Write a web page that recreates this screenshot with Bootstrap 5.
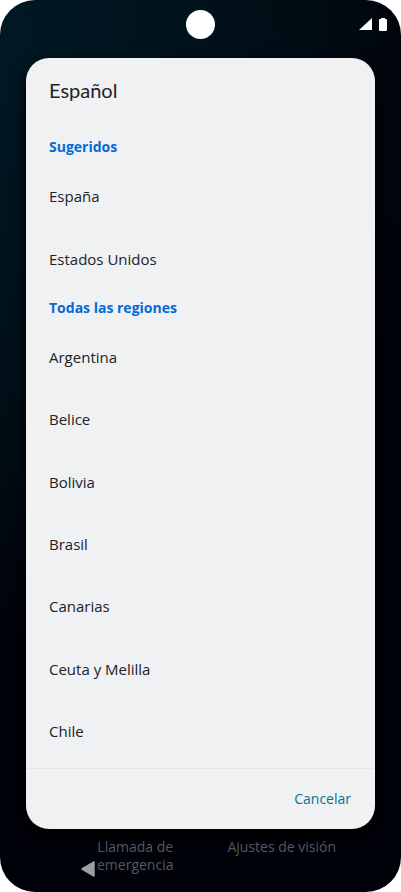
<!DOCTYPE html>
<html lang="es">
<head>
<meta charset="utf-8">
<meta name="viewport" content="width=device-width, initial-scale=1">
<title>Español</title>
<link href="https://cdn.jsdelivr.net/npm/bootstrap@5.3.0/dist/css/bootstrap.min.css" rel="stylesheet">
<style>
body { background: #fff; font-family: "Open Sans", "Noto Sans", sans-serif; font-size: 15px; line-height: 20px; color: #202327; }
.phone { border-radius: 35px; background: radial-gradient(ellipse 110% 65% at 0 6%, #001826 0%, #00141d 35%, #000c14 70%, #00020a 100%) #00020a; }
.status { height: 58px; padding: 10px 14px 0; }
.status > div { flex: 1 1 0; }
.camera { width: 29px; height: 29px; }
.signals { height: 28px; gap: 7px; }
.dialog-sheet { margin: 0 26px; border-radius: 23px; background: #eff1f3; box-shadow: 0 6px 16px #000; }
.dialog-sheet h1 { font-family: Lato, sans-serif; font-size: 20px; line-height: 24px; margin: 0; padding: 20px 23px 27px; font-weight: 400; }
.regions { padding-bottom: 6px; }
.regions h2 { flex: 36 0 36px; margin: 0; padding: 0 23px; font-weight: 700; font-size: 14px; line-height: 20px; color: #0769d6; }
.region { flex: 62 0 62px; border: 0; background: none; padding: 0 23px; text-align: left; color: inherit; }
.region:hover { background: #e4e8ec; }
.actions { height: 61px; border-top: 1px solid #e4e6e9; padding: 0 24px; }
.cancel { border: 0; background: none; padding: 0; font-size: 14px; color: #087391; }
.bottom { height: 63px; padding: 9px 65px 0 81px; font-size: 14px; line-height: 18px; }
.bottom a { color: #55585c; }
.back { border: 0; background: none; padding: 0; margin: 23px 2px 0 0; line-height: 0; }
</style>
<script src="https://cdn.jsdelivr.net/npm/bootstrap@5.3.0/dist/js/bootstrap.bundle.min.js"></script>
</head>
<body>
<div class="phone d-flex flex-column min-vh-100">
  <header class="status d-flex align-items-start flex-shrink-0">
    <div></div>
    <span class="camera rounded-circle bg-white"></span>
    <div class="signals d-flex justify-content-end align-items-center">
      <svg width="13" height="13" viewBox="0 0 13 13" fill="#fff" aria-hidden="true"><path d="M13 0v12H0z"/></svg>
      <svg width="8" height="13" viewBox="0 0 8 13" fill="#fff" aria-hidden="true"><path d="M2 0h4v1h1q1 0 1 1v10q0 1-1 1H1q-1 0-1-1V2q0-1 1-1h1z"/></svg>
    </div>
  </header>
  <main class="dialog-sheet d-flex flex-column flex-grow-1" role="dialog" aria-labelledby="title">
    <h1 id="title">Español</h1>
    <div class="regions d-flex flex-column flex-grow-1">
      <h2 class="d-flex align-items-center">Sugeridos</h2>
      <button class="region" type="button">España</button>
      <button class="region" type="button">Estados Unidos</button>
      <h2 class="d-flex align-items-center">Todas las regiones</h2>
      <button class="region" type="button">Argentina</button>
      <button class="region" type="button">Belice</button>
      <button class="region" type="button">Bolivia</button>
      <button class="region" type="button">Brasil</button>
      <button class="region" type="button">Canarias</button>
      <button class="region" type="button">Ceuta y Melilla</button>
      <button class="region" type="button">Chile</button>
    </div>
    <div class="actions d-flex justify-content-end align-items-center">
      <button class="cancel" type="button">Cancelar</button>
    </div>
  </main>
  <footer class="bottom d-flex align-items-start flex-shrink-0">
    <button class="back" type="button" aria-label="Atrás"><svg width="14" height="16" viewBox="0 0 14 16" aria-hidden="true"><path d="M13 1v14L1 8z" fill="#9da0a3" stroke="#9da0a3" stroke-width="1.5" stroke-linejoin="round"/></svg></button>
    <a class="text-center text-decoration-none" href="#emergencia">Llamada de<br>emergencia</a>
    <a class="ms-auto text-decoration-none" href="#vision">Ajustes de visión</a>
  </footer>
</div>
</body>
</html>
